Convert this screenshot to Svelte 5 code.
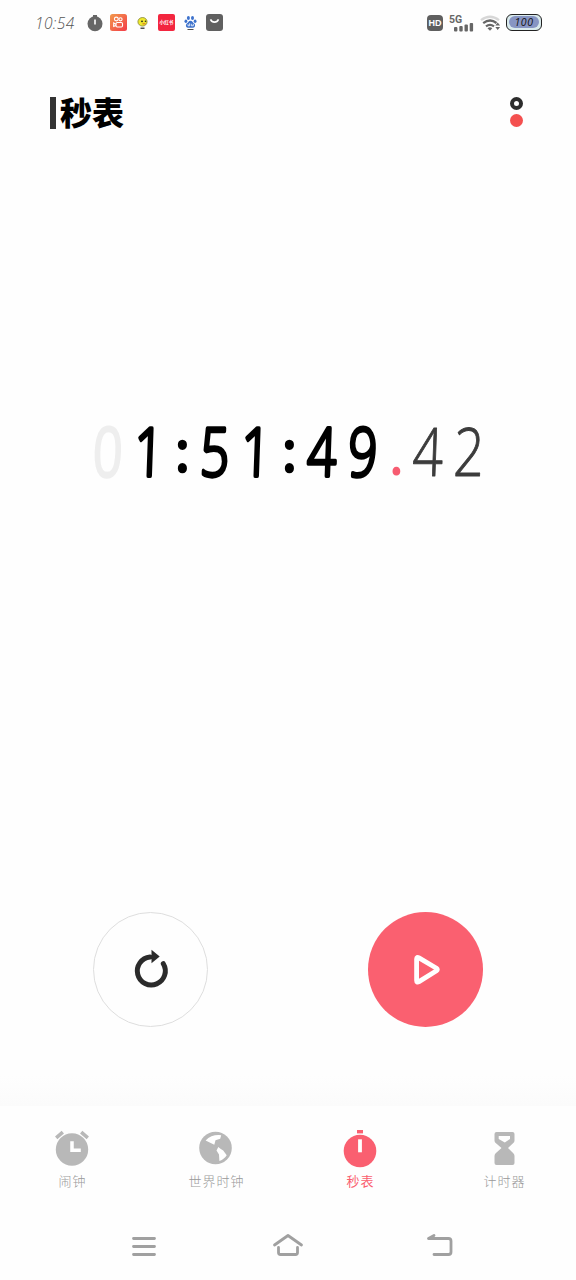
<script>
	let elapsed = '01:51:49';
	let hundredths = '42';

	let cells = [
		...Array.from(elapsed).map((char, i) => ({
			char,
			kind: i == 0 && char == '0' ? 'faded' : 'main'
		})),
		{ char: '.', kind: 'point' },
		...Array.from(hundredths).map((char) => ({ char, kind: 'small' }))
	];

	const isMark = (char) => char == ':' || char == '.';

	let tabs = [
		{ id: 'alarm', label: '闹钟' },
		{ id: 'world', label: '世界时钟' },
		{ id: 'stopwatch', label: '秒表' },
		{ id: 'timer', label: '计时器' }
	];

	let active = 'stopwatch';
</script>

<main>
	<div class="status">
		<span class="clock">10:54</span>
		<div class="apps">
			<svg width="16" height="18" viewBox="0 0 16 18">
				<path d="M6 1h4v3H6z" fill="#666" />
				<circle cx="8" cy="9.7" r="7.5" fill="#666" />
				<path d="M8 5.5v5" stroke="#fff" stroke-width="1.6" />
			</svg>
			<svg width="17" height="17" viewBox="0 0 17 17">
				<defs>
					<linearGradient id="warm" x1="0" y1="0" x2="1" y2="1">
						<stop offset="0" stop-color="#f29a4c" />
						<stop offset="1" stop-color="#f33b49" />
					</linearGradient>
				</defs>
				<rect width="17" height="17" rx="2.5" fill="url(#warm)" />
				<g fill="none" stroke="#fff" stroke-width="1.1">
					<circle cx="6.3" cy="5" r="1.9" />
					<circle cx="10.5" cy="5.3" r="1.6" />
					<rect x="6" y="8.5" width="6.5" height="4.5" rx="1.2" />
					<path d="M6 10.2 3.7 9v3.5L6 11.4" />
				</g>
			</svg>
			<svg width="17" height="17" viewBox="0 0 17 17">
				<ellipse cx="8.5" cy="7.8" rx="4.6" ry="4.3" fill="#eee92e" stroke="#77772b" stroke-width=".7" />
				<circle cx="8" cy="7.3" r=".9" fill="#222" />
				<circle cx="11.5" cy="7.3" r=".8" fill="#222" />
				<path d="M8.5 9.8h3" stroke="#dc7b20" stroke-width="1.2" />
				<path d="M6.5 14.2h4" stroke="#222" stroke-width="1.2" />
			</svg>
			<span class="note">小红书</span>
			<svg width="17" height="17" viewBox="0 0 17 17" fill="#3d72cc">
				<ellipse cx="6.4" cy="4" rx="1.5" ry="2.1" />
				<ellipse cx="10.5" cy="4" rx="1.5" ry="2.1" />
				<ellipse cx="3.9" cy="7.3" rx="1.4" ry="1.8" />
				<ellipse cx="13.1" cy="7.3" rx="1.4" ry="1.8" />
				<path d="M8.5 6.8c1.8 0 2.2 1.7 3.7 2.8 1.7 1.5.7 4.200-1 4.200H5.800c-1.800 0-2.600-2.600-1-4.200C6.300 8.500 6.700 6.800 8.500 6.800z" />
				<path d="M6 10.2v1.600h1.600V9.300M9.300 9.800v2h2v-2" fill="none" stroke="#fff" stroke-width=".8" />
				<path d="M5.5 15.500h6" stroke="#222" stroke-width=".8" />
			</svg>
			<svg width="17" height="17" viewBox="0 0 17 17">
				<rect width="17" height="17" rx="3" fill="#606060" />
				<path d="M4.500 5.300c1.700 3.800 6.300 3.800 8 0" fill="none" stroke="#fff" stroke-width="1.600" />
			</svg>
		</div>
		<div class="signals">
			<span class="hd">HD</span>
			<svg width="26" height="18" viewBox="0 0 26 18">
				<text class="net" x="0" y="9">5G</text>
				<g fill="#666">
					<rect x="5" y="13" width="3.4" height="4.500" rx="1" />
					<rect x="10.3" y="12" width="3.4" height="5.500" rx="1" />
					<rect x="15.5" y="10.5" width="3.4" height="7" rx="1" />
					<rect x="20.7" y="9" width="3.4" height="8.500" rx="1" />
				</g>
			</svg>
			<svg class="wifi" width="21" height="18" viewBox="0 0 21 18">
				<g fill="none" stroke="#666" stroke-width="2.3">
					<path d="M1 6.2Q10 -.8 19 6.2" stroke="#d7d7d7" />
					<path d="M3.2 9.2Q10 4 16.5 9" />
					<path d="M6 12.4Q10 9.4 14 12.4" />
				</g>
				<path d="M7.5 14.2Q10 12.4 12.3 14.2L10 16.8z" fill="#666" />
				<path d="m17.7 8.6 2.4 3h-4.800zM17.700 16l2.400-3h-4.800z" fill="#666" />
			</svg>
			<span class="battery"><i>100</i></span>
		</div>
	</div>

	<header>
		<h1>秒表</h1>
		<div class="more">
			<span class="ring"></span>
			<span class="dot"></span>
		</div>
	</header>

	<div class="time">
		{#each cells as { char, kind }}
			<svg
				class={kind}
				width={isMark(char) ? 25 : 41}
				height="110"
				viewBox={isMark(char) ? '-12.5 0 25 110' : '-20.5 0 41 110'}
			>
				<text class:mark={isMark(char)} y={char == ':' ? 76 : char == '.' ? 79 : 82}>{char}</text>
			</svg>
		{/each}
	</div>

	<div class="controls">
		<button class="reset" aria-label="复位">
			<svg width="40" height="44" viewBox="1 1.8 40 44">
				<path
					d="M33.300 17.500A14 14 0 1 1 20 10.800"
					fill="none"
					stroke="#2b2b2b"
					stroke-width="5"
					stroke-linecap="round"
				/>
				<path d="M21.500 3.600 29.700 10.300 21.500 17z" fill="#2b2b2b" />
			</svg>
		</button>
		<button class="play" aria-label="开始">
			<svg width="40" height="40" viewBox="1 .3 40 40">
				<path
					d="M11.600 9.300Q11.600 6.800 14 8.200L31.500 18.600Q33.200 19.800 31.500 21L14 31.900Q11.600 33.300 11.600 30.700z"
					fill="none"
					stroke="#fff"
					stroke-width="4.800"
					stroke-linejoin="round"
				/>
			</svg>
		</button>
	</div>

	<div class="shade"></div>

	<nav>
		{#each tabs as { id, label }}
			<button class="tab" class:active={id == active} on:click={() => (active = id)}>
				<svg width="40" height="40" viewBox="0 0 40 40" fill="currentColor">
					{#if id == 'alarm'}
						<circle cx="20" cy="21.5" r="16.2" />
						<path d="M4.2 9.8 10.8 4.2M29.200 4.200 35.800 9.800" stroke="currentColor" stroke-width="3.600" />
						<path d="M20 13.200V22.300h8.800" fill="none" stroke="#fff" stroke-width="3.500" />
					{:else if id == 'world'}
						<circle cx="19.5" cy="20" r="16.3" />
						<g fill="#fff">
							<path d="M9.600 12.400Q15.500 6.300 25.200 7.200L24.200 10.800 19.500 12.200 18.300 16.800z" />
							<path d="M22.300 19Q24.200 20.700 27.200 22.500L30.700 27.200Q28.500 31 23.400 33L23 26.500 20.500 22.500z" />
						</g>
					{:else if id == 'stopwatch'}
						<circle cx="20" cy="23" r="16.3" />
						<path d="M17 2h6v3.400h-6z" />
						<path d="M20 11.300v13" stroke="#fff" stroke-width="3.800" />
					{:else}
						<path
							d="M12.500 4h16q2 0 2 2v6.500q0 1.500-1.200 2.600L24 20l5.300 5.200q1.200 1.200 1.200 2.800v7q0 2-2 2h-16q-2 0-2-2v-7q0-1.600 1.200-2.800L17.500 20l-5.800-4.900q-1.200-1.100-1.200-2.600V6q0-2 2-2z"
						/>
						<path d="M14.700 8H26v3l-5.200 3.500L14.700 11z" fill="#fff" />
					{/if}
				</svg>
				<span>{label}</span>
			</button>
		{/each}
	</nav>

	<div class="system">
		<svg width="30" height="30" viewBox="0 0 30 30">
			<path d="M4.500 7.500h21M4.500 15.500h21M4.500 23.500h21" />
		</svg>
		<svg class="home" width="34" height="30" viewBox="0 0 34 30">
			<path d="M3.500 14 17 4.500 30.500 14M7.500 16.500v5q0 2 2 2h15q2 0 2-2v-5" />
		</svg>
		<svg width="30" height="30" viewBox="0 0 30 30">
			<path d="M10 4.500 4.500 7.500H24.500q2.500 0 2.500 2.500V21q0 2.500-2.500 2.500H10" />
		</svg>
	</div>
</main>

<style>
	:global(body) {
		margin: 0;
		background: #fefefe;
	}

	main {
		display: flex;
		flex-direction: column;
		box-sizing: border-box;
		width: 576px;
		height: 1280px;
		overflow: hidden;
		background: #fefefe;
		font-family: 'Noto Sans', 'Noto Sans CJK SC', sans-serif;
	}

	svg {
		display: block;
		flex: none;
	}

	button {
		padding: 0;
		border: 0;
		background: none;
		font: inherit;
		cursor: pointer;
	}

	.status {
		display: flex;
		align-items: center;
		height: 45px;
		padding: 0 34px 0 35px;
	}

	.clock {
		width: 52px;
		color: #555;
		font: italic 300 15.5px 'Open Sans', sans-serif;
		letter-spacing: 0.4px;
	}

	.apps {
		display: flex;
		align-items: center;
		gap: 7px;
		flex: 1;
	}

	.note {
		width: 17px;
		border-radius: 2px;
		background: #f3263f;
		color: #fff;
		font: 700 4.6px/17px 'Noto Sans CJK SC', sans-serif;
		text-align: center;
		white-space: nowrap;
	}

	.signals {
		display: flex;
		align-items: center;
	}

	.hd {
		width: 16px;
		margin-right: 6px;
		border-radius: 4px;
		background: #5f5f5f;
		color: #fff;
		font: 700 9px/16px 'Liberation Sans', sans-serif;
		text-align: center;
	}

	.net {
		fill: #666;
		font: 700 10.5px Roboto, sans-serif;
	}

	.wifi {
		margin: 0 5px;
	}

	.battery {
		box-sizing: border-box;
		width: 36px;
		height: 17px;
		padding: 1px 2px;
		border: 1.5px solid #222;
		border-radius: 6px;
		background: #d9eaec;
	}

	.battery i {
		display: block;
		height: 12px;
		border-radius: 6px;
		background: #8795c3;
		color: #111;
		font: italic 500 10.5px/12px 'Open Sans', sans-serif;
		letter-spacing: 0.6px;
		text-align: center;
	}

	header {
		display: flex;
		justify-content: space-between;
		align-items: center;
		height: 135px;
		padding: 0 53px 0 50px;
	}

	h1 {
		height: 32px;
		margin: 0;
		padding-left: 4px;
		border-left: 6px solid #333;
		color: #000;
		font: 900 32px/28px 'Noto Sans CJK SC', sans-serif;
	}

	.more {
		display: flex;
		flex-direction: column;
		gap: 4px;
		padding-bottom: 1px;
	}

	.more span {
		box-sizing: border-box;
		width: 13px;
		height: 13px;
		border-radius: 50%;
	}

	.ring {
		border: 4px solid #2c2c2c;
	}

	.dot {
		background: #f4504f;
	}

	.time {
		display: flex;
		height: 110px;
		margin-top: 214px;
		padding-left: 88px;
	}

	.time text {
		fill: #000;
		stroke: #000;
		stroke-width: 4px;
		stroke-linejoin: round;
		font: 300 67px 'Open Sans', sans-serif;
		text-anchor: middle;
		transform: skewX(-2deg) translateX(1.5px) scaleX(0.76);
	}

	.time .mark {
		stroke-width: 5.5px;
		font-size: 52px;
		transform: scaleX(0.95);
	}

	.time .faded text {
		fill: #eee;
		stroke: #eee;
	}

	.time .small text {
		fill: #3c3c3c;
		stroke: #3c3c3c;
		stroke-width: 1px;
		font-size: 67px;
		transform: skewX(-2deg) translateX(0.5px) scaleX(0.8);
	}

	.time .point text {
		fill: #f75c71;
		stroke: #f75c71;
		stroke-width: 4px;
	}

	.controls {
		display: flex;
		justify-content: space-between;
		margin-top: auto;
		padding: 0 93px;
	}

	.controls button {
		display: flex;
		justify-content: center;
		align-items: center;
		box-sizing: border-box;
		width: 115px;
		height: 115px;
		border-radius: 50%;
	}

	.reset {
		border: 1.5px solid #dedede;
	}

	.play {
		background: #fa6070;
	}

	.shade {
		height: 30px;
		margin-top: 49px;
		background: linear-gradient(#fefefe, #fbfbfb);
	}

	nav {
		display: grid;
		grid-template-columns: repeat(4, 1fr);
		height: 106px;
		background: #fefefe;
	}

	.tab {
		display: flex;
		flex-direction: column;
		align-items: center;
		padding-top: 22px;
		color: #b8b8b8;
	}

	.tab span {
		margin-top: 3px;
		padding-left: 1px;
		color: #999;
		font: 300 13px/20px 'Noto Sans CJK SC', sans-serif;
		letter-spacing: 1px;
	}

	.tab.active,
	.tab.active span {
		color: #fa5f70;
	}

	.tab.active span {
		font-weight: 400;
	}

	.system {
		display: flex;
		justify-content: space-between;
		align-items: center;
		height: 68px;
		padding: 0 122px 0 129px;
	}

	.home {
		margin-right: 7px;
	}

	.system path {
		fill: none;
		stroke: #a0a0a0;
		stroke-width: 2.8px;
		stroke-linecap: round;
		stroke-linejoin: round;
	}
</style>
